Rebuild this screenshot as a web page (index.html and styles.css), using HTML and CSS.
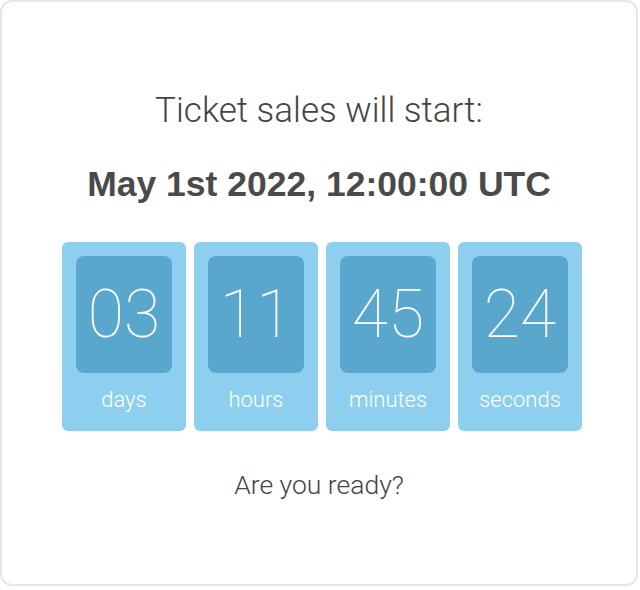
FILE: index.html
```html
<!DOCTYPE html>
<html lang="en">
<head>
  <meta charset="UTF-8">
  <meta name="viewport" content="width=device-width, initial-scale=1">
  <title>Countdown</title>
  <link rel="stylesheet" href="styles.css">
</head>
<body>

  <div class="card">
    <h1>Ticket sales will start:</h1>
    <h2>May 1st 2022, 12:00:00 UTC</h2>

    <div class="countdown">
      <div class="unit">
        <div class="num">03</div>
        <div class="label">days</div>
      </div>
      <div class="unit">
        <div class="num">11</div>
        <div class="label">hours</div>
      </div>
      <div class="unit">
        <div class="num">45</div>
        <div class="label">minutes</div>
      </div>
      <div class="unit">
        <div class="num">24</div>
        <div class="label">seconds</div>
      </div>
    </div>

    <p class="ready">Are you ready?</p>
  </div>

</body>
</html>
```

FILE: styles.css
```css
body {
  margin: 0;
  font-family: Roboto, "Liberation Sans", sans-serif;
  color: #444;
}
.card {
  box-sizing: border-box;
  width: 638px;
  height: 586px;
  border: 2px solid #e6e6e6;
  border-radius: 12px;
  background: #fff;
  text-align: center;
  padding-top: 87px;
}
h1 {
  margin: 0;
  font-size: 35px;
  font-weight: 300;
  line-height: 44px;
}
h2 {
  margin: 31px 0 0;
  font-family: "Liberation Sans", Arial, sans-serif;
  font-size: 35.5px;
  font-weight: 700;
  line-height: 40px;
  color: #4a4a4a;
}
.countdown {
  display: flex;
  justify-content: center;
  gap: 8px;
  margin-top: 38px;
  padding-left: 6px;
}
.unit {
  width: 124px;
  height: 189px;
  box-sizing: border-box;
  padding: 14px 14px 0;
  background: #8ecff0;
  border-radius: 6px;
  color: #fff;
}
.num {
  height: 117px;
  background: #5aa7ce;
  border-radius: 8px;
  font-size: 66px;
  font-weight: 100;
  line-height: 117px;
}
.label {
  margin-top: 12px;
  font-size: 22px;
  font-weight: 300;
  line-height: 30px;
}
.ready {
  margin: 38px 0 0;
  font-size: 26.5px;
  font-weight: 300;
  line-height: 32px;
}
```
